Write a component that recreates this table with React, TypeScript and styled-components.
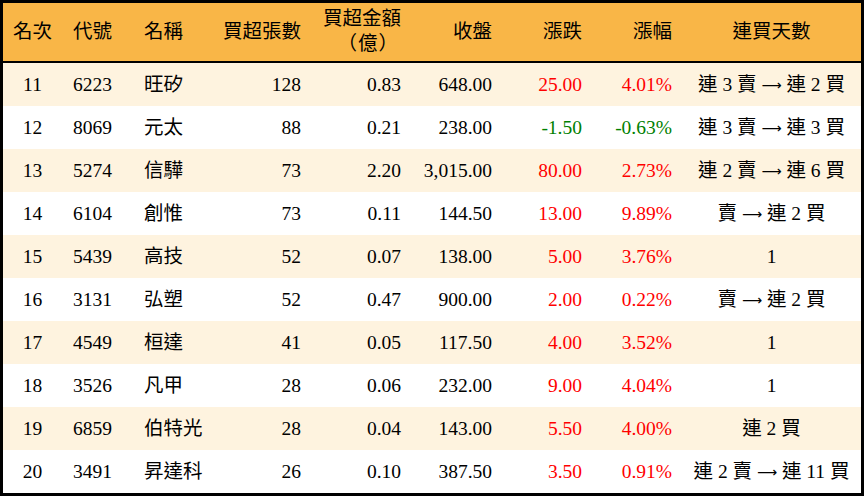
import styled, { createGlobalStyle } from "styled-components";

const GlobalStyle = createGlobalStyle`
  html, body {
    margin: 0;
    padding: 0;
    background: #ffffff;
  }
`;

type Row = {
  rank: number;
  code: string;
  name: string;
  lots: number;
  amount: string;
  close: string;
  change: string;
  pct: string;
  streak: string;
};

const rows: Row[] = [
  { rank: 11, code: "6223", name: "旺矽", lots: 128, amount: "0.83", close: "648.00", change: "25.00", pct: "4.01%", streak: "連 3 賣 → 連 2 買" },
  { rank: 12, code: "8069", name: "元太", lots: 88, amount: "0.21", close: "238.00", change: "-1.50", pct: "-0.63%", streak: "連 3 賣 → 連 3 買" },
  { rank: 13, code: "5274", name: "信驊", lots: 73, amount: "2.20", close: "3,015.00", change: "80.00", pct: "2.73%", streak: "連 2 賣 → 連 6 買" },
  { rank: 14, code: "6104", name: "創惟", lots: 73, amount: "0.11", close: "144.50", change: "13.00", pct: "9.89%", streak: "賣 → 連 2 買" },
  { rank: 15, code: "5439", name: "高技", lots: 52, amount: "0.07", close: "138.00", change: "5.00", pct: "3.76%", streak: "1" },
  { rank: 16, code: "3131", name: "弘塑", lots: 52, amount: "0.47", close: "900.00", change: "2.00", pct: "0.22%", streak: "賣 → 連 2 買" },
  { rank: 17, code: "4549", name: "桓達", lots: 41, amount: "0.05", close: "117.50", change: "4.00", pct: "3.52%", streak: "1" },
  { rank: 18, code: "3526", name: "凡甲", lots: 28, amount: "0.06", close: "232.00", change: "9.00", pct: "4.04%", streak: "1" },
  { rank: 19, code: "6859", name: "伯特光", lots: 28, amount: "0.04", close: "143.00", change: "5.50", pct: "4.00%", streak: "連 2 買" },
  { rank: 20, code: "3491", name: "昇達科", lots: 26, amount: "0.10", close: "387.50", change: "3.50", pct: "0.91%", streak: "連 2 賣 → 連 11 買" },
];

const Tabla = styled.div`
  box-sizing: border-box;
  width: 864px;
  height: 496px;
  border: 3px solid #000000;
  font-family: "Liberation Serif", "Noto Sans CJK TC", serif;
  font-size: 19.5px;
  color: #000000;
`;

const Fila = styled.div<{ $fondo: string; $alto: number }>`
  display: grid;
  grid-template-columns: 59px 72px 78px 99px 100px 91px 90px 90px 179px;
  height: ${(p) => p.$alto}px;
  background: ${(p) => p.$fondo};
`;

const Cabecera = styled(Fila)`
  border-bottom: 2px solid #000000;
`;

const Celda = styled.div<{ $alinear: "left" | "center" | "right"; $color?: string }>`
  display: flex;
  align-items: center;
  justify-content: ${(p) =>
    p.$alinear === "left" ? "flex-start" : p.$alinear === "right" ? "flex-end" : "center"};
  text-align: ${(p) => p.$alinear};
  padding: ${(p) =>
    p.$alinear === "left" ? "0 0 0 10px" : p.$alinear === "right" ? "0 10px 0 0" : "0"};
  color: ${(p) => p.$color || "#000000"};
  white-space: pre;
  line-height: 24px;
`;

const CeldaCodigo = styled(Celda)`
  padding-left: 11px;
`;

const DosLineas = styled.span`
  display: flex;
  flex-direction: column;
  align-items: flex-end;
  line-height: 25px;
  margin-top: -2px;
`;

const Parentesis = styled.span`
  margin-right: 2px;
  letter-spacing: 1px;
`;

const Flecha = styled.span`
  font-family: "DejaVu Sans", sans-serif;
  font-size: 14px;
  display: inline-block;
`;

const colorDe = (v: string) => (v.startsWith("-") ? "#008000" : "#ff0000");

function Racha({ texto }: { texto: string }) {
  const partes = texto.split("→");
  if (partes.length < 2) return <>{texto}</>;
  return (
    <>
      {partes[0]}
      <Flecha>⟶</Flecha>
      {partes[1]}
    </>
  );
}

function App() {
  return (
    <>
      <GlobalStyle />
      <Tabla>
        <Cabecera $fondo="#f9b647" $alto={58}>
          <Celda $alinear="center">名次</Celda>
          <CeldaCodigo $alinear="left">代號</CeldaCodigo>
          <Celda $alinear="left">名稱</Celda>
          <Celda $alinear="right">買超張數</Celda>
          <Celda $alinear="right">
            <DosLineas>
              <span>買超金額</span>
              <Parentesis>（億）</Parentesis>
            </DosLineas>
          </Celda>
          <Celda $alinear="right">收盤</Celda>
          <Celda $alinear="right">漲跌</Celda>
          <Celda $alinear="right">漲幅</Celda>
          <Celda $alinear="center">連買天數</Celda>
        </Cabecera>
        {rows.map((r, i) => (
          <Fila key={r.rank} $fondo={i % 2 === 0 ? "#fef3df" : "#ffffff"} $alto={43}>
            <Celda $alinear="center">{r.rank}</Celda>
            <CeldaCodigo $alinear="left">{r.code}</CeldaCodigo>
            <Celda $alinear="left">{r.name}</Celda>
            <Celda $alinear="right">{r.lots}</Celda>
            <Celda $alinear="right">{r.amount}</Celda>
            <Celda $alinear="right">{r.close}</Celda>
            <Celda $alinear="right" $color={colorDe(r.change)}>{r.change}</Celda>
            <Celda $alinear="right" $color={colorDe(r.pct)}>{r.pct}</Celda>
            <Celda $alinear="center">
              <Racha texto={r.streak} />
            </Celda>
          </Fila>
        ))}
      </Tabla>
    </>
  );
}

export default App;
